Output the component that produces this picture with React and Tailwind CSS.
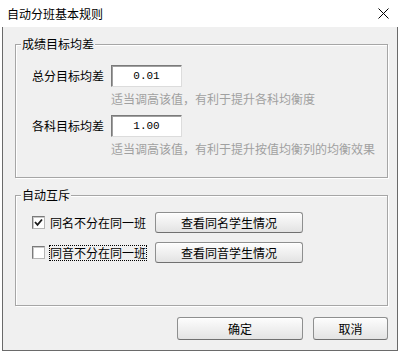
import React from "react";

const font = { fontFamily: '"Noto Sans CJK SC", "Noto Sans", sans-serif' };

function Btn({ children, className = "" }) {
  return (
    <div
      className={
        "flex items-center justify-center rounded-[3px] border border-[#8e8f8f] border-b-[#707070] bg-gradient-to-b from-[#fdfdfd] via-[#f0f0f0] to-[#e3e3e3] text-[12px] leading-[14px] text-black shadow-[inset_0_1px_0_#ffffff] " +
        className
      }
    >
      {children}
    </div>
  );
}

function Input({ value }) {
  return (
    <div className="flex h-[22px] w-[71px] items-center justify-center border border-t-[#7a7a7a] border-l-[#7a7a7a] border-r-[#dcdcdc] border-b-[#dcdcdc] bg-white shadow-[inset_1px_1px_0_#a0a0a0]">
      <span className="text-[11px] leading-[14px] text-black" style={{ fontFamily: '"Liberation Mono", monospace' }}>
        {value}
      </span>
    </div>
  );
}

function Group({ title, className = "", children }) {
  return (
    <div className={"relative border border-[#a6a6a6] shadow-[inset_1px_1px_0_#ffffff,1px_1px_0_#ffffff] " + className}>
      <div className="absolute left-[5px] top-[-8px] bg-[#f0f0f0] px-[1px] text-[12px] leading-[14px] text-black">
        {title}
      </div>
      {children}
    </div>
  );
}

function Check({ checked }) {
  return (
    <div className="flex h-[13px] w-[13px] shrink-0 items-center justify-center border border-[#7a7a7a] border-b-[#b5b5b5] border-r-[#b5b5b5] bg-white shadow-[inset_1px_1px_0_#c8c8c8]">
      {checked && (
        <svg width="9" height="9" viewBox="0 0 9 9">
          <polyline points="1,4 3.5,6.8 8,1.5" fill="none" stroke="#1a1a1a" strokeWidth="1.8" />
        </svg>
      )}
    </div>
  );
}

export default function App() {
  return (
    <div className="h-[353px] w-[401px] overflow-hidden bg-white" style={font}>
      <div className="flex h-[27px] items-center justify-between bg-white pl-[7px] pr-[12px]">
        <span className="text-[12px] leading-[14px] text-black">自动分班基本规则</span>
        <svg width="11" height="11" viewBox="0 0 11 11">
          <line x1="0.5" y1="0.5" x2="10.5" y2="10.5" stroke="#000" strokeWidth="1" />
          <line x1="10.5" y1="0.5" x2="0.5" y2="10.5" stroke="#000" strokeWidth="1" />
        </svg>
      </div>
      <div className="ml-[2px] flex h-[324px] w-[396px] flex-col border-b border-l border-r border-[#6a6a6a] bg-[#f0f0f0] pl-[12px] pr-[9px] pt-[17px]">
        <Group title="成绩目标均差" className="pb-[21px] pl-[16px] pt-[20px]">
          <div className="flex items-center">
            <span className="w-[79px] text-[12px] leading-[14px] text-black">总分目标均差</span>
            <Input value="0.01" />
          </div>
          <div className="ml-[79px] mt-[5px] text-[12px] leading-[14px] text-[#a0a0a0]">
            适当调高该值，有利于提升各科均衡度
          </div>
          <div className="mt-[9px] flex items-center">
            <span className="w-[79px] text-[12px] leading-[14px] text-black">各科目标均差</span>
            <Input value="1.00" />
          </div>
          <div className="ml-[79px] mt-[5px] text-[12px] leading-[14px] text-[#a0a0a0]">
            适当调高该值，有利于提升按值均衡列的均衡效果
          </div>
        </Group>

        <Group title="自动互斥" className="mt-[17px] pb-[42px] pl-[16px] pt-[16px]">
          <div className="flex h-[21px] items-center">
            <Check checked />
            <span className="ml-[4px] w-[98px] border border-dotted border-transparent text-[12px] leading-[14px] text-black">
              同名不分在同一班
            </span>
            <Btn className="ml-[8px] h-[21px] w-[148px]">查看同名学生情况</Btn>
          </div>
          <div className="mt-[9px] flex h-[21px] items-center">
            <Check />
            <span className="ml-[4px] w-[98px] border border-dotted border-black text-[12px] leading-[14px] text-black">
              同音不分在同一班
            </span>
            <Btn className="ml-[8px] h-[21px] w-[148px]">查看同音学生情况</Btn>
          </div>
        </Group>

        <div className="mt-[11px] flex justify-end gap-[10px]">
          <Btn className="h-[23px] w-[126px]">确定</Btn>
          <Btn className="h-[23px] w-[75px]">取消</Btn>
        </div>
      </div>
    </div>
  );
}
